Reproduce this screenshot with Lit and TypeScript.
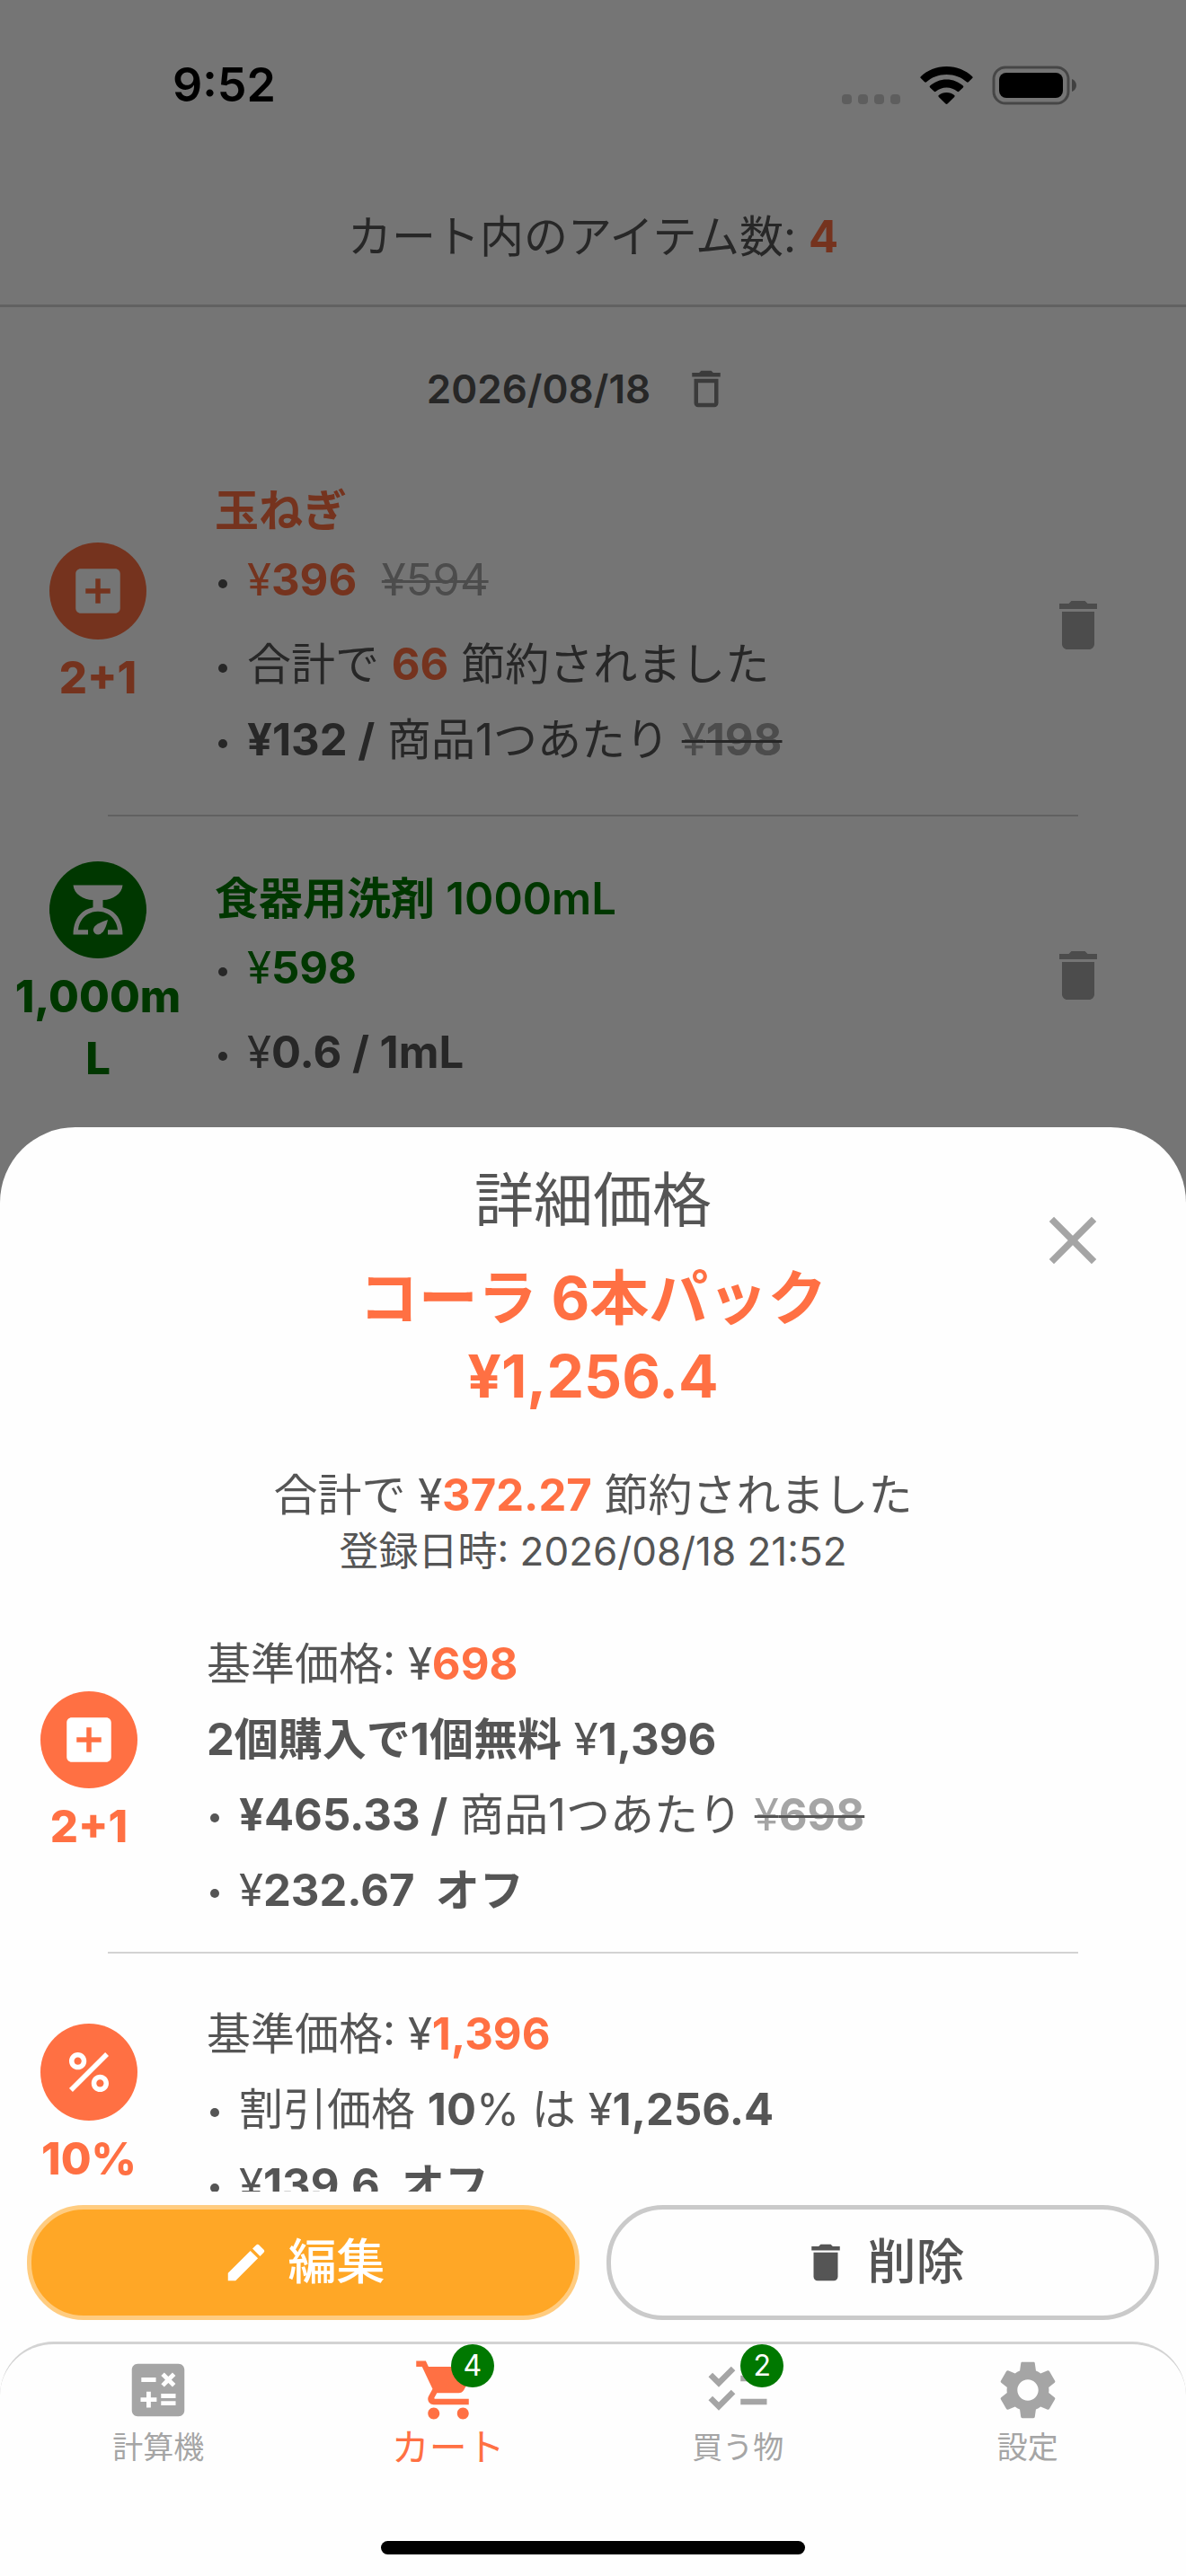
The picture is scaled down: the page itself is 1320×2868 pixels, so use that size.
import { LitElement, html, css, svg, type TemplateResult } from "lit";
import { customElement, property } from "lit/decorators.js";
import { classMap } from "lit/directives/class-map.js";

const icons: Record<string, TemplateResult> = {
  addBox: svg`<path fill-rule="evenodd" d="M19 3H5c-1.11 0-2 .9-2 2v14c0 1.1.89 2 2 2h14c1.1 0 2-.9 2-2V5c0-1.1-.9-2-2-2zm-2 10h-4v4h-2v-4H7v-2h4V7h2v4h4v2z"/>`,
  scale: svg`<path d="M2 22C2 16 5 12 10 11V8C6 8 2.3 5.5 2 2H22C21.7 5.5 18 8 14 8V11C19 12 22 16 22 22H16V20.1H20C19.5 15.5 16 12.6 12 12.6S4.500 15.5 4 20.1H8V22Z"/><path d="M16 16Q15.300 19.200 14.100 20.800Q13.100 22 12.100 22A2 2 0 0 1 10.100 20Q10.300 18.600 12 17.600Q13.800 16.700 16 16Z"/>`,
  percent: svg`<path d="M7.500 11C9.430 11 11 9.430 11 7.500S9.430 4 7.500 4 4 5.570 4 7.500 5.570 11 7.500 11zm0-5C8.330 6 9 6.670 9 7.500S8.330 9 7.500 9 6 8.330 6 7.500 6.670 6 7.500 6zM4 18.580 18.590 4 20 5.410 5.420 20zM16.500 13c-1.930 0-3.500 1.570-3.500 3.500s1.570 3.500 3.500 3.500 3.500-1.570 3.500-3.500-1.570-3.500-3.500-3.500zm0 5c-.830 0-1.500-.670-1.500-1.500s.670-1.500 1.500-1.500 1.500.670 1.500 1.500-.670 1.500-1.500 1.500z"/>`,
  trash: svg`<path d="M6 19c0 1.100.9 2 2 2h8c1.100 0 2-.9 2-2V7H6v12zM19 4h-3.500l-1-1h-5l-1 1H5v2h14V4z"/>`,
  trashOutline: svg`<path d="M6 19c0 1.100.9 2 2 2h8c1.100 0 2-.9 2-2V7H6v12zM8 9h8v10H8V9zm7.500-5-1-1h-5l-1 1H5v2h14V4z"/>`,
  close: svg`<path d="M19 6.410 17.590 5 12 10.590 6.410 5 5 6.410 10.590 12 5 17.590 6.410 19 12 13.410 17.590 19 19 17.590 13.410 12z"/>`,
  edit: svg`<path d="M3 17.250V21h3.750L17.810 9.940l-3.750-3.750L3 17.250zM20.710 7.040c.390-.390.390-1.020 0-1.410l-2.340-2.340c-.390-.390-1.020-.390-1.410 0l-1.830 1.830 3.750 3.750 1.830-1.830z"/>`,
  calculator: svg`<path fill-rule="evenodd" d="M19 3H5c-1.100 0-2 .9-2 2v14c0 1.100.9 2 2 2h14c1.100 0 2-.9 2-2V5c0-1.100-.9-2-2-2zm-5.970 4.060L14.090 6l1.410 1.410L16.910 6l1.060 1.060-1.410 1.410 1.410 1.410-1.060 1.060-1.410-1.400-1.410 1.410-1.060-1.060 1.410-1.410-1.410-1.420zm-6.780.660h5v1.500h-5v-1.500zM11.500 16h-2v2H8v-2H6v-1.500h2v-2h1.500v2h2V16zm6.500 1.250h-5v-1.500h5v1.500zm0-2.500h-5v-1.500h5v1.500z"/>`,
  cart: svg`<path d="M7 18c-1.100 0-1.990.9-1.990 2S5.900 22 7 22s2-.9 2-2-.9-2-2-2zM1 2v2h2l3.600 7.590-1.350 2.450c-.160.280-.250.610-.250.960 0 1.100.9 2 2 2h12v-2H7.420c-.140 0-.250-.110-.250-.250l.030-.120.900-1.630h7.450c.750 0 1.410-.410 1.750-1.030l3.580-6.490c.080-.140.120-.310.120-.480 0-.550-.450-1-1-1H5.210l-.940-2H1zm16 16c-1.100 0-1.990.9-1.990 2s.890 2 1.990 2 2-.9 2-2-.9-2-2-2z"/>`,
  checklist: svg`<path d="M22 7h-9v2h9V7zm0 8h-9v2h9v-2zM5.540 11 2 7.460l1.410-1.410 2.120 2.120 4.240-4.240 1.410 1.410L5.540 11zm0 8L2 15.460l1.410-1.410 2.120 2.120 4.240-4.240 1.410 1.410L5.540 19z"/>`,
  settings: svg`<path d="M19.140 12.940c.040-.300.060-.610.060-.940 0-.320-.020-.640-.070-.940l2.030-1.580c.180-.140.230-.410.120-.610l-1.920-3.320c-.120-.220-.370-.290-.590-.220l-2.390.960c-.500-.380-1.030-.700-1.620-.940l-.360-2.540c-.040-.240-.240-.410-.480-.410h-3.840c-.240 0-.430.170-.470.410l-.360 2.540c-.590.240-1.130.570-1.620.940l-2.390-.960c-.220-.080-.470 0-.590.220L2.740 8.870c-.120.210-.080.470.120.610l2.030 1.580c-.050.300-.090.630-.090.940s.020.640.070.940l-2.030 1.580c-.180.140-.230.410-.120.610l1.920 3.320c.120.220.370.290.590.220l2.390-.960c.500.380 1.030.700 1.620.940l.360 2.540c.050.240.240.410.480.410h3.840c.240 0 .440-.170.470-.410l.360-2.540c.590-.240 1.130-.560 1.620-.940l2.390.960c.220.080.470 0 .590-.220l1.920-3.320c.120-.220.070-.470-.120-.610l-2.010-1.580zM12 15.600c-1.980 0-3.600-1.620-3.600-3.600s1.620-3.600 3.600-3.600 3.600 1.620 3.600 3.600-1.620 3.600-3.600 3.600z"/>`,
};

@customElement("app-icon")
class AppIcon extends LitElement {
  @property() name = "";
  static styles = css`
    :host { display: block; flex: none; width: 54px; height: 54px; }
    .glyph { display: block; width: 100%; height: 100%; fill: currentColor; }
  `;
  render() {
    return html`<svg class="glyph" viewBox="0 0 24 24" aria-hidden="true">${icons[this.name]}</svg>`;
  }
}

@customElement("offer-mark")
class OfferMark extends LitElement {
  @property() icon = "";
  @property() label = "";
  static styles = css`
    :host { display: flex; flex-direction: column; align-items: center; gap: 8px; }
    .disc {
      display: grid; place-items: center; width: 108px; height: 108px;
      border-radius: 50%; background: currentColor;
    }
    .icon { width: 66px; height: 66px; color: #fff; }
    .label {
      width: 204px; text-align: center; font-size: 49px; line-height: 69px;
      font-weight: 800; word-break: break-all;
    }
  `;
  render() {
    return html`
      <div class="disc"><app-icon class="icon" name=${this.icon}></app-icon></div>
      <div class="label">${this.label}</div>
    `;
  }
}

interface CartItem {
  tone: "orange" | "green";
  icon: string;
  label: string;
  name: string;
  lines: TemplateResult[];
}

const cartItems: CartItem[] = [
  {
    tone: "orange", icon: "addBox", label: "2+1", name: "玉ねぎ",
    lines: [
      html`<span class="tone">¥<b>396</b></span>&nbsp; <s class="was">¥594</s>`,
      html`合計で <b class="tone">66</b> 節約されました`,
      html`<b>¥132 /</b> 商品1つあたり <s class="was dark">¥<b>198</b></s>`,
    ],
  },
  {
    tone: "green", icon: "scale", label: "1,000mL", name: "食器用洗剤 1000mL",
    lines: [
      html`<span class="tone">¥<b>598</b></span>`,
      html`¥<b>0.6 / 1mL</b>`,
    ],
  },
];

const tabs = [
  { icon: "calculator", label: "計算機", count: 0, active: false },
  { icon: "cart", label: "カート", count: 4, active: true },
  { icon: "checklist", label: "買う物", count: 2, active: false },
  { icon: "settings", label: "設定", count: 0, active: false },
];

@customElement("app-root")
class AppRoot extends LitElement {
  static styles = css`
    :host {
      display: block;
      font-family: Inter, "Noto Sans CJK JP", sans-serif;
      font-size: 49px; line-height: 84px; color: #555;
      --orange: #ff7043; --green: #007800; --muted: #a5a5a5; --rule: #d3d3d3;
    }
    * { box-sizing: border-box; }
    h1, h2, p, ul { margin: 0; padding: 0; font-weight: 400; }
    ul { list-style: none; }
    b { font-weight: 700; }
    button { font: inherit; color: inherit; border: 0; padding: 0; background: none; cursor: pointer; }

    .screen { display: grid; grid-template-columns: minmax(0, 1fr); height: 100vh; overflow: hidden; }
    .page, .scrim { grid-area: 1 / 1; min-width: 0; min-height: 0; }
    .page { background: #fff; overflow: hidden; }
    .scrim { z-index: 1; display: flex; flex-direction: column; justify-content: flex-end; background: rgba(0, 0, 0, 0.54); }

    .status { display: flex; align-items: center; justify-content: space-between; height: 190px; padding: 0 120px 0 192px; color: #000; }
    .clock { font-size: 52px; font-weight: 600; }
    .signals { display: block; width: 264px; height: 44px; }
    .count { height: 152px; padding: 32px 0; border-bottom: 3px solid var(--rule); text-align: center; }
    .count b { color: var(--orange); }
    .day { display: flex; align-items: center; justify-content: center; gap: 35px; height: 135px; padding: 46px 32px 0 0; font-size: 44px; font-weight: 600; }
    .day app-icon { color: #808080; }

    .orange { --tone: var(--orange); }
    .green { --tone: var(--green); }
    .tone { color: var(--tone); }
    offer-mark { color: var(--tone); }
    .was { color: var(--muted); text-decoration: line-through; text-decoration-thickness: 3px; }
    .dark { text-decoration-color: #555; }
    .bullet::before {
      content: ""; display: inline-block; width: 10px; height: 10px; margin: 0 22px 0 4px;
      border-radius: 50%; background: #555; vertical-align: middle;
    }

    .item { display: grid; grid-template-columns: 218px minmax(0, 1fr) 72px; align-items: center; column-gap: 21px; padding: 49px 84px 41px 0; }
    .rule { height: 2px; margin: 0 120px; border: 0; background: var(--rule); }
    .body { padding-top: 8px; }
    .name { font-size: 49px; line-height: 70px; font-weight: 600; color: var(--tone); }
    .price { margin-bottom: 10px; }
    .remove { color: var(--muted); }
    .remove app-icon { width: 72px; height: 72px; }

    .sheet { display: flex; flex-direction: column; height: 56.25vh; border-radius: 84px 84px 0 0; background: #fefefe; overflow: hidden; }
    .head { display: grid; grid-template-columns: 171px minmax(0, 1fr) 171px; flex: none; padding: 39px 0 7px; text-align: center; }
    .summary { grid-column: 2; }
    .close { grid-column: 3; align-self: start; justify-self: start; margin-top: 42px; color: var(--muted); }
    .close app-icon { width: 90px; height: 90px; }
    .title { font-size: 66px; line-height: 84px; margin-bottom: 24px; }
    .product { font-size: 66px; line-height: 87px; font-weight: 700; color: var(--orange); margin-bottom: 56px; }
    .saved { line-height: 66px; }
    .saved b { color: var(--orange); }
    .stamp { font-size: 44px; line-height: 58px; }

    .offers { flex: 1; min-height: 0; overflow-y: auto; scrollbar-width: none; }
    .offer { display: grid; grid-template-columns: 198px minmax(0, 1fr); align-items: center; column-gap: 32px; padding: 48px 32px 26px 0; }
    .offer offer-mark { padding-bottom: 6px; }

    .actions { display: grid; grid-template-columns: 1fr 1fr; gap: 30px; flex: none; padding: 15px 30px 24px; }
    .action {
      display: flex; align-items: center; justify-content: center; gap: 20px; height: 128px;
      border: 5px solid #cacaca; border-radius: 63px; font-size: 54px; font-weight: 500;
    }
    .primary { border-color: #ffcc80; background: #ffa726; color: #fff; }

    .nav { flex: none; border-top: 3px solid var(--rule); border-radius: 60px 60px 0 0; }
    .tabs { display: grid; grid-template-columns: repeat(4, 1fr); padding: 12px 15px 0; }
    .tab { display: flex; flex-direction: column; align-items: center; color: var(--muted); font-size: 34px; line-height: 50px; text-decoration: none; }
    .tab.active { color: var(--orange); font-size: 42px; }
    .pic { position: relative; }
    .pic app-icon { width: 78px; height: 78px; }
    .badge {
      position: absolute; top: -12px; right: -12px; width: 48px; height: 48px; border-radius: 50%;
      background: var(--green); color: #fff; font-size: 32px; line-height: 48px; text-align: center;
    }
    .home { width: 472px; height: 15px; margin: 79px auto 24px; border-radius: 8px; background: #000; }
  `;

  private renderItem(item: CartItem, index: number) {
    return html`
      ${index ? html`<hr class="rule" />` : ""}
      <div class="item ${item.tone}">
        <offer-mark icon=${item.icon} label=${item.label}></offer-mark>
        <div class="body">
          <h2 class="name">${item.name}</h2>
          ${item.lines.map((line, i) => html`<p class=${classMap({ bullet: true, price: i === 0 })}>${line}</p>`)}
        </div>
        <button class="remove" aria-label="削除"><app-icon name="trash"></app-icon></button>
      </div>
    `;
  }

  private renderSheet() {
    return html`
      <section class="sheet" role="dialog" aria-labelledby="sheet-title">
        <header class="head">
          <div class="summary">
            <h1 class="title" id="sheet-title">詳細価格</h1>
            <h2 class="product">コーラ 6本パック<br />¥1,256.4</h2>
            <p class="saved">合計で ¥<b>372.27</b> 節約されました</p>
            <p class="stamp">登録日時: 2026/08/18 21:52</p>
          </div>
          <button class="close" aria-label="閉じる"><app-icon name="close"></app-icon></button>
        </header>
        <div class="offers">
          <div class="offer orange">
            <offer-mark icon="addBox" label="2+1"></offer-mark>
            <div>
              <p>基準価格: ¥<b class="tone">698</b></p>
              <p><b>2個購入で1個無料</b> ¥<b>1,396</b></p>
              <p class="bullet"><b>¥465.33 /</b> 商品1つあたり <s class="was dark">¥<b>698</b></s></p>
              <p class="bullet">¥<b>232.67 &nbsp;オフ</b></p>
            </div>
          </div>
          <hr class="rule" />
          <div class="offer orange">
            <offer-mark icon="percent" label="10%"></offer-mark>
            <div>
              <p>基準価格: ¥<b class="tone">1,396</b></p>
              <p class="bullet">割引価格 <b>10</b>% は ¥<b>1,256.4</b></p>
              <p class="bullet">¥<b>139.6 &nbsp;オフ</b></p>
            </div>
          </div>
        </div>
        <div class="actions">
          <button class="action primary"><app-icon name="edit"></app-icon>編集</button>
          <button class="action"><app-icon name="trash"></app-icon>削除</button>
        </div>
        <nav class="nav">
          <div class="tabs">
            ${tabs.map((tab) => html`
              <a href="#" class=${classMap({ tab: true, active: tab.active })}>
                <span class="pic">
                  <app-icon name=${tab.icon}></app-icon>
                  ${tab.count ? html`<span class="badge">${tab.count}</span>` : ""}
                </span>
                ${tab.label}
              </a>
            `)}
          </div>
          <div class="home"></div>
        </nav>
      </section>
    `;
  }

  render() {
    return html`
      <div class="screen">
        <main class="page">
          <div class="status">
            <span class="clock">9:52</span>
            <svg class="signals" viewBox="0 0 264 44" aria-hidden="true">
              <g fill="#000" fill-opacity=".2">
                <rect x="1" y="32" width="11" height="11" rx="4" />
                <rect x="19" y="32" width="11" height="11" rx="4" />
                <rect x="37" y="32" width="11" height="11" rx="4" />
                <rect x="55" y="32" width="11" height="11" rx="4" />
              </g>
              <path d="M117.500 1c11.400 0 21.600 4.500 28.700 11.200.6.600.6 1.300 0 1.900l-4.300 4.200c-.6.600-1.400.6-2 0-5.800-5.300-13.700-8.300-22.400-8.300s-16.600 3-22.400 8.300c-.6.600-1.400.6-2 0l-4.300-4.200c-.6-.6-.6-1.300 0-1.900C95.900 5.500 106.100 1 117.500 1z" />
              <path d="M117.500 15.500c7.200 0 13.600 2.700 18.400 7.100.6.500.6 1.200 0 1.800l-4.600 4.400c-.6.500-1.300.5-1.900 0-3.200-2.800-7.300-4.400-11.900-4.400s-8.700 1.600-11.900 4.400c-.6.500-1.300.5-1.900 0l-4.600-4.400c-.6-.6-.6-1.300 0-1.800 4.800-4.400 11.200-7.100 18.400-7.100z" />
              <path d="M117.500 30c3.400 0 6.400 1.200 8.700 3.100.6.500.6 1.200 0 1.800l-7.700 7.600c-.6.600-1.400.6-2 0l-7.700-7.600c-.6-.6-.6-1.300 0-1.800 2.300-1.900 5.300-3.100 8.700-3.100z" />
              <rect x="170" y="2" width="83" height="40" rx="13" fill="none" stroke="#000" stroke-opacity=".4" stroke-width="3" />
              <rect x="176" y="8" width="71" height="28" rx="8" />
              <path d="M257 15c3 1 5 4 5 7s-2 6-5 7z" fill-opacity=".45" />
            </svg>
          </div>
          <p class="count">カート内のアイテム数: <b>4</b></p>
          <div class="day">
            <span>2026/08/18</span>
            <button aria-label="この日付を削除"><app-icon name="trashOutline"></app-icon></button>
          </div>
          <section>${cartItems.map((item, i) => this.renderItem(item, i))}</section>
        </main>
        <div class="scrim">${this.renderSheet()}</div>
      </div>
    `;
  }
}
